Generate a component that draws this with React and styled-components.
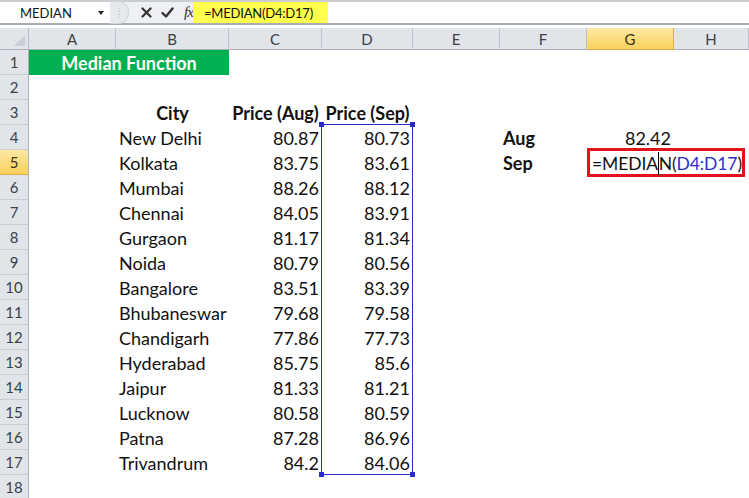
import React from 'react';
import styled, { createGlobalStyle } from 'styled-components';

const GlobalStyle = createGlobalStyle`
  html, body {
    margin: 0;
    padding: 0;
    background: #fff;
  }
  body {
    font-family: Lato, "Open Sans", sans-serif;
    overflow: hidden;
  }
`;

const COLS = ['A', 'B', 'C', 'D', 'E', 'F', 'G', 'H'];
const WIDTHS = [87, 113, 93, 91, 87, 87, 87, 75];

const cities = [
  ['New Delhi', '80.87', '80.73'],
  ['Kolkata', '83.75', '83.61'],
  ['Mumbai', '88.26', '88.12'],
  ['Chennai', '84.05', '83.91'],
  ['Gurgaon', '81.17', '81.34'],
  ['Noida', '80.79', '80.56'],
  ['Bangalore', '83.51', '83.39'],
  ['Bhubaneswar', '79.68', '79.58'],
  ['Chandigarh', '77.86', '77.73'],
  ['Hyderabad', '85.75', '85.6'],
  ['Jaipur', '81.33', '81.21'],
  ['Lucknow', '80.58', '80.59'],
  ['Patna', '87.28', '86.96'],
  ['Trivandrum', '84.2', '84.06'],
];

// cells keyed by sheet row / column letter
const content = {
  1: { A: { text: 'Median Function', title: true } },
  3: {
    B: { text: 'City', bold: true, align: 'center' },
    C: { text: 'Price (Aug)', bold: true, align: 'center' },
    D: { text: 'Price (Sep)', bold: true, align: 'center' },
  },
};
cities.forEach(([city, aug, sep], i) => {
  content[i + 4] = {
    B: { text: city },
    C: { text: aug, align: 'right' },
    D: { text: sep, align: 'right' },
  };
});
content[4].F = { text: 'Aug', bold: true };
content[4].G = { text: '82.42', align: 'right' };
content[5].F = { text: 'Sep', bold: true };

const Page = styled.div`
  width: 749px;
  height: 498px;
  overflow: hidden;
  background: #fff;
`;

const FormulaBar = styled.div`
  display: flex;
  height: 25px;
  box-sizing: border-box;
  background: #e3e7ec;
  border-top: 2px solid #c9cdd2;
  border-bottom: 2px solid #a9afb6;
`;

const NameBox = styled.div`
  width: 110px;
  display: flex;
  align-items: center;
  justify-content: space-between;
  padding: 0 6px 0 20px;
  box-sizing: border-box;
  background: #fff;
  font-size: 13px;
  color: #111;
`;

const DropArrow = styled.span`
  width: 0;
  height: 0;
  border-left: 3px solid transparent;
  border-right: 3px solid transparent;
  border-top: 4px solid #222;
`;

const Tools = styled.div`
  width: 83px;
  display: flex;
  align-items: center;
  gap: 9px;
  background: #eef0f3;
`;

const Grip = styled.div`
  width: 18px;
  height: 21px;
  border-radius: 0 11px 11px 0;
  background: #e6e9ed;
  border: 1px solid #d3d7dc;
  border-left: none;
  display: flex;
  align-items: center;
  justify-content: center;
  color: #b5b9be;
  font-size: 9px;
  margin-right: 3px;
`;

const Fx = styled.span`
  font-family: "Liberation Serif", serif;
  font-style: italic;
  font-size: 15px;
  color: #333;
  letter-spacing: -1px;
  margin-left: 1px;
`;

const FormulaInput = styled.div`
  flex: 1;
  background: #fff;
  display: flex;
  align-items: center;
`;

const FormulaText = styled.span`
  background: #ffff4d;
  height: 100%;
  display: flex;
  align-items: center;
  padding: 0 15px 0 11px;
  font-size: 13px;
  letter-spacing: -0.2px;
  color: #111;
`;

const Spacer = styled.div`
  height: 3px;
  background: #fff;
`;

const Sheet = styled.div`
  display: grid;
  grid-template-columns: 29px ${WIDTHS.map((w) => `${w}px`).join(' ')};
  grid-template-rows: 22px repeat(18, 25px);
`;

const Corner = styled.div`
  grid-row: 1;
  grid-column: 1;
  background: #e1e5ea;
  border-right: 1px solid #b7bdc4;
  border-bottom: 1px solid #a9b0b8;
  position: relative;
  &::after {
    content: "";
    position: absolute;
    right: 3px;
    bottom: 3px;
    border-left: 11px solid transparent;
    border-bottom: 11px solid #c9ced4;
  }
`;

const activeBg = 'linear-gradient(#fde7a2, #f9d25c)';

const ColHead = styled.div`
  grid-row: 1;
  grid-column: ${(p) => p.$c};
  display: flex;
  align-items: center;
  justify-content: center;
  font-size: 15px;
  color: ${(p) => (p.$active ? '#3b3214' : '#3c4047')};
  background: ${(p) => (p.$active ? activeBg : '#e1e5ea')};
  border-right: 1px solid ${(p) => (p.$active ? '#e2ad47' : '#bcc2c9')};
  border-bottom: 1px solid ${(p) => (p.$active ? '#e2ad47' : '#a9b0b8')};
  box-sizing: border-box;
`;

const RowHead = styled.div`
  grid-row: ${(p) => p.$r + 1};
  grid-column: 1;
  display: flex;
  align-items: center;
  justify-content: center;
  font-size: 15px;
  color: ${(p) => (p.$active ? '#3b3214' : '#3c4047')};
  background: ${(p) => (p.$active ? activeBg : '#e1e5ea')};
  border-right: 1px solid #a9b0b8;
  border-bottom: 1px solid ${(p) => (p.$active ? '#e2ad47' : '#c8cdd3')};
  box-sizing: border-box;
`;

const Cell = styled.div`
  grid-row: ${(p) => p.$r + 1};
  grid-column: ${(p) => p.$c} / span ${(p) => p.$span || 1};
  display: flex;
  align-items: center;
  justify-content: ${(p) =>
    p.$align === 'right' ? 'flex-end' : p.$align === 'center' ? 'center' : 'flex-start'};
  padding: 1px 3px 0;
  font-size: 18px;
  font-weight: ${(p) => (p.$bold ? 700 : 400)};
  color: #111;
  white-space: nowrap;
  min-width: 0;
`;

const Title = styled(Cell)`
  background: #00b050;
  color: #fff;
  font-weight: 700;
  justify-content: center;
`;

const RangeBox = styled.div`
  grid-column: 5;
  grid-row: 5 / 19;
  margin: -1px 0 0 -1px;
  border: 1.5px solid #2a2ad0;
  position: relative;
  pointer-events: none;
`;

const Handle = styled.span`
  position: absolute;
  width: 5px;
  height: 5px;
  background: #2a2ad0;
  ${(p) => (p.$top ? 'top: -3px;' : 'bottom: -3px;')}
  ${(p) => (p.$left ? 'left: -3px;' : 'right: -3px;')}
`;

const EditBox = styled.div`
  grid-column: 8 / 10;
  grid-row: 6;
  margin: -2px 4px -2px 0;
  border: 3px solid #e3131b;
  background: #fff;
  display: flex;
  align-items: center;
  padding: 1px 0 0 2px;
  font-size: 17.5px;
  letter-spacing: -0.1px;
  color: #111;
  white-space: nowrap;
`;

const Ref = styled.span`
  color: #2f2fc8;
`;

const Caret = styled.span`
  display: inline-block;
  width: 1px;
  height: 23px;
  background: #000;
`;

const XIcon = () => (
  <svg width="11" height="11" viewBox="0 0 11 11">
    <path d="M1.5 1.5 L9.5 9.5 M9.5 1.5 L1.5 9.5" stroke="#333" strokeWidth="2.2" strokeLinecap="round" />
  </svg>
);

const CheckIcon = () => (
  <svg width="13" height="11" viewBox="0 0 13 11">
    <path d="M1.5 6 L5 9.5 L11.5 1.5" stroke="#333" strokeWidth="2.4" fill="none" strokeLinecap="round" strokeLinejoin="round" />
  </svg>
);

const App = () => {
  const cells = [];
  for (let r = 1; r <= 18; r++) {
    cells.push(
      <RowHead key={`h${r}`} $r={r} $active={r === 5}>
        {r}
      </RowHead>
    );
    const row = content[r] || {};
    COLS.forEach((col, i) => {
      const item = row[col];
      if (!item) return;
      if (item.title) {
        cells.push(
          <Title key={`${col}${r}`} $r={r} $c={i + 2} $span={2}>
            {item.text}
          </Title>
        );
        return;
      }
      cells.push(
        <Cell key={`${col}${r}`} $r={r} $c={i + 2} $bold={item.bold} $align={item.align}>
          {item.text}
        </Cell>
      );
    });
  }

  return (
    <Page>
      <GlobalStyle />
      <FormulaBar>
        <NameBox>
          MEDIAN
          <DropArrow />
        </NameBox>
        <Tools>
          <Grip>⁞</Grip>
          <XIcon />
          <CheckIcon />
          <Fx>fx</Fx>
        </Tools>
        <FormulaInput>
          <FormulaText>=MEDIAN(D4:D17)</FormulaText>
        </FormulaInput>
      </FormulaBar>
      <Spacer />
      <Sheet>
        <Corner />
        {COLS.map((c, i) => (
          <ColHead key={c} $c={i + 2} $active={c === 'G'}>
            {c}
          </ColHead>
        ))}
        {cells}
        <RangeBox>
          <Handle $top $left />
          <Handle $top />
          <Handle $left />
          <Handle />
        </RangeBox>
        <EditBox>
          =MEDIA<Caret />N(<Ref>D4:D17</Ref>)
        </EditBox>
      </Sheet>
    </Page>
  );
};

export default App;
